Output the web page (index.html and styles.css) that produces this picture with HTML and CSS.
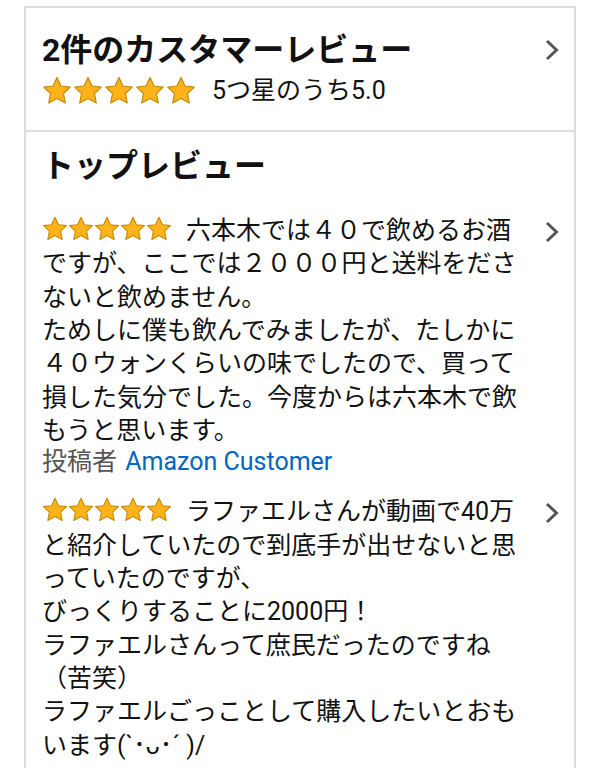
FILE: index.html
```html
<!DOCTYPE html>
<html lang="ja">
<head>
<meta charset="utf-8">
<link rel="stylesheet" href="styles.css">
</head>
<body>
<div class="card">
  <section class="summary">
    <div class="summary-main">
      <h2 class="title">2件のカスタマーレビュー</h2>
      <div class="rating">
        <span class="stars stars-lg">
          <svg viewBox="0 0 24 24"><polygon points="12,1.2 15.2,8 22.6,8.9 17.2,14 18.6,21.6 12,18 5.4,21.6 6.8,14 1.4,8.9 8.8,8"/></svg>
          <svg viewBox="0 0 24 24"><polygon points="12,1.2 15.2,8 22.6,8.9 17.2,14 18.6,21.6 12,18 5.4,21.6 6.8,14 1.4,8.9 8.8,8"/></svg>
          <svg viewBox="0 0 24 24"><polygon points="12,1.2 15.2,8 22.6,8.9 17.2,14 18.6,21.6 12,18 5.4,21.6 6.8,14 1.4,8.9 8.8,8"/></svg>
          <svg viewBox="0 0 24 24"><polygon points="12,1.2 15.2,8 22.6,8.9 17.2,14 18.6,21.6 12,18 5.4,21.6 6.8,14 1.4,8.9 8.8,8"/></svg>
          <svg viewBox="0 0 24 24"><polygon points="12,1.2 15.2,8 22.6,8.9 17.2,14 18.6,21.6 12,18 5.4,21.6 6.8,14 1.4,8.9 8.8,8"/></svg>
        </span>
        <span class="rating-text">5つ星のうち5.0</span>
      </div>
    </div>
    <svg class="chevron chevron-head" viewBox="0 0 14 22"><polyline points="2,2 11.5,11 2,20"/></svg>
  </section>

  <section class="reviews">
    <h2 class="title">トップレビュー</h2>

    <div class="review">
      <div class="review-body">
        <p class="review-text"><span class="stars stars-sm">
          <svg viewBox="0 0 24 24"><polygon points="12,1.2 15.2,8 22.6,8.9 17.2,14 18.6,21.6 12,18 5.4,21.6 6.8,14 1.4,8.9 8.8,8"/></svg>
          <svg viewBox="0 0 24 24"><polygon points="12,1.2 15.2,8 22.6,8.9 17.2,14 18.6,21.6 12,18 5.4,21.6 6.8,14 1.4,8.9 8.8,8"/></svg>
          <svg viewBox="0 0 24 24"><polygon points="12,1.2 15.2,8 22.6,8.9 17.2,14 18.6,21.6 12,18 5.4,21.6 6.8,14 1.4,8.9 8.8,8"/></svg>
          <svg viewBox="0 0 24 24"><polygon points="12,1.2 15.2,8 22.6,8.9 17.2,14 18.6,21.6 12,18 5.4,21.6 6.8,14 1.4,8.9 8.8,8"/></svg>
          <svg viewBox="0 0 24 24"><polygon points="12,1.2 15.2,8 22.6,8.9 17.2,14 18.6,21.6 12,18 5.4,21.6 6.8,14 1.4,8.9 8.8,8"/></svg>
        </span>六本木では４０で飲めるお酒ですが、ここでは２０００円と送料をださないと飲めません。<br>ためしに僕も飲んでみましたが、たしかに４０ウォンくらいの味でしたので、買って損した気分でした。今度からは六本木で飲もうと思います。</p>
        <p class="author">投稿者 <a class="author-link">Amazon Customer</a></p>
      </div>
      <svg class="chevron chevron-row" viewBox="0 0 14 22"><polyline points="2,2 11.5,11 2,20"/></svg>
    </div>

    <div class="review">
      <div class="review-body">
        <p class="review-text"><span class="stars stars-sm">
          <svg viewBox="0 0 24 24"><polygon points="12,1.2 15.2,8 22.6,8.9 17.2,14 18.6,21.6 12,18 5.4,21.6 6.8,14 1.4,8.9 8.8,8"/></svg>
          <svg viewBox="0 0 24 24"><polygon points="12,1.2 15.2,8 22.6,8.9 17.2,14 18.6,21.6 12,18 5.4,21.6 6.8,14 1.4,8.9 8.8,8"/></svg>
          <svg viewBox="0 0 24 24"><polygon points="12,1.2 15.2,8 22.6,8.9 17.2,14 18.6,21.6 12,18 5.4,21.6 6.8,14 1.4,8.9 8.8,8"/></svg>
          <svg viewBox="0 0 24 24"><polygon points="12,1.2 15.2,8 22.6,8.9 17.2,14 18.6,21.6 12,18 5.4,21.6 6.8,14 1.4,8.9 8.8,8"/></svg>
          <svg viewBox="0 0 24 24"><polygon points="12,1.2 15.2,8 22.6,8.9 17.2,14 18.6,21.6 12,18 5.4,21.6 6.8,14 1.4,8.9 8.8,8"/></svg>
        </span>ラファエルさんが動画で40万と紹介していたので到底手が出せないと思っていたのですが、<br>びっくりすることに2000円！<br>ラファエルさんって庶民だったのですね（苦笑）<br>ラファエルごっことして購入したいとおもいます(`･ᴗ･´ )/</p>
      </div>
      <svg class="chevron chevron-row" viewBox="0 0 14 22"><polyline points="2,2 11.5,11 2,20"/></svg>
    </div>
  </section>
</div>
</body>
</html>
```

FILE: styles.css
```css
html, body {
  margin: 0;
  padding: 0;
  background: #ffffff;
}

body {
  font-family: Roboto, "Noto Sans CJK JP", sans-serif;
  color: #111111;
  height: 768px;
  overflow: hidden;
}

.card {
  margin: 6px 24px 0 24px;
  border: 2px solid #dddddd;
  border-bottom: 0;
  min-height: 800px;
}

.summary {
  display: flex;
  align-items: flex-start;
  padding: 24px 15px 22px 16px;
  border-bottom: 2px solid #dddddd;
}

.summary-main {
  flex: 1;
}

.title {
  margin: 0;
  font-size: 32px;
  line-height: 37px;
  font-weight: 700;
  color: #111111;
}

.rating {
  display: flex;
  align-items: center;
  height: 34px;
  margin-top: 5px;
}

.stars {
  display: inline-flex;
}

.stars svg polygon {
  fill: #ffb31a;
  stroke: #c48a08;
  stroke-width: 1;
  stroke-linejoin: round;
}

.stars-lg {
  gap: 1px;
}

.stars-lg svg {
  width: 30px;
  height: 30px;
}

.rating-text {
  margin-left: 16px;
  font-size: 25px;
  line-height: 34px;
  color: #111111;
}

.chevron polyline {
  fill: none;
  stroke: #555555;
  stroke-width: 3;
}

.chevron {
  width: 14px;
  height: 22px;
  flex: none;
}

.chevron-head {
  margin-top: 7px;
}

.reviews {
  padding: 16px 15px 0 16px;
}

.review {
  display: flex;
  align-items: flex-start;
}

.reviews .title {
  margin-bottom: 29px;
}

.review + .review {
  margin-top: 18px;
}

.review-body {
  width: 485px;
}

.review-text {
  margin: 0;
  font-size: 25px;
  line-height: 33.33px;
  color: #111111;
}

.stars-sm {
  gap: 0;
  margin-right: 14px;
  vertical-align: -3px;
}

.stars-sm svg {
  width: 26px;
  height: 26px;
}

.author {
  margin: 0;
  font-size: 25px;
  line-height: 30px;
  color: #555555;
}

.author-link {
  color: #0066c0;
  margin-left: 2px;
}

.chevron-row {
  margin-left: auto;
  margin-top: 7px;
}
```
